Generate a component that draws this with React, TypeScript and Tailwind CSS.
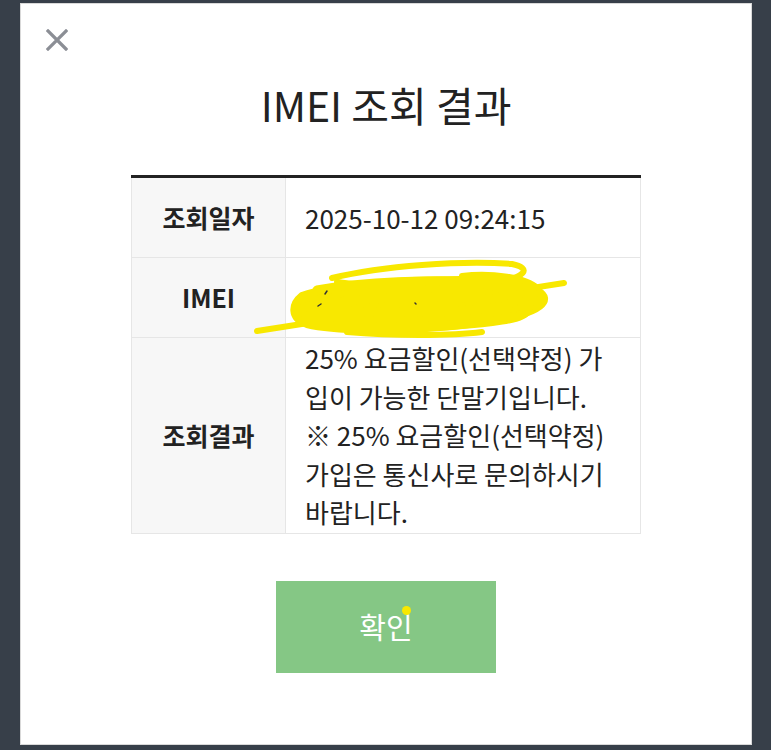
import React from 'react';

const rows = [
  { label: '조회일자', value: '2025-10-12 09:24:15' },
  { label: 'IMEI', value: '' },
];

// 노란 형광펜 낙서 (IMEI 가림)
const Scribble: React.FC = () => (
  <svg
    className="absolute left-0 top-0 pointer-events-none"
    width="510"
    height="80"
    viewBox="0 0 510 80"
    fill="none"
    stroke="#f8e800"
    strokeLinecap="round"
    strokeLinejoin="round"
    style={{ overflow: 'visible' }}
  >
    <path d="M125 73 L432 25" strokeWidth="6" />
    <path d="M200 20 C250 8 330 2 380 6 C400 10 395 20 360 24 C300 30 230 28 205 24" strokeWidth="6" />
    <path d="M170 38 C200 28 260 22 330 22 C380 22 410 30 412 40 C414 52 380 62 320 68 C260 74 200 72 175 66 C158 60 160 46 170 38 Z" fill="#f8e800" strokeWidth="8" />
    <path d="M165 52 C200 40 300 36 380 42 C405 46 400 58 370 62 C320 70 230 72 180 66" strokeWidth="9" />
    <path d="M185 32 C230 24 300 20 350 26 C390 32 395 46 360 50 C300 56 220 56 190 50" strokeWidth="9" />
    <path d="M215 74 C260 78 320 78 350 74" strokeWidth="6" />
    <path d="M330 18 C360 14 395 20 405 30" strokeWidth="6" />
    <path d="M186 48 l3 -2 M193 36 l2 -3 M283 45 l1 1" stroke="#333" strokeWidth="1.5" />
  </svg>
);

const App: React.FC = () => {
  return (
    <div
      className="w-[771px] h-[750px] bg-[#373f49] pt-[3px] pl-[20px] overflow-hidden"
      style={{ fontFamily: '"Noto Sans CJK KR", "Noto Sans", sans-serif' }}
    >
      <div className="relative w-[732px] h-[742px] bg-white border border-[#d9d9d9] flex flex-col items-center">
        {/* Close */}
        <button className="absolute left-[25px] top-[25px] w-[22px] h-[22px]" aria-label="닫기">
          <svg width="22" height="22" viewBox="0 0 22 22" stroke="#8b8e95" strokeWidth="3.2" strokeLinecap="square">
            <path d="M2 2 L20 20 M20 2 L2 20" />
          </svg>
        </button>

        {/* Header */}
        <h1 className="mt-[76px] text-[41px] leading-[49px] font-normal text-[#222]">IMEI 조회 결과</h1>

        {/* Table */}
        <div className="mt-[46px] w-[510px] border-t-[3px] border-[#222]">
          {rows.map((row, idx) => (
            <div key={row.label} className="relative flex h-[80px] border-x border-b border-[#e6e6e6]">
              <div className="w-[154px] shrink-0 bg-[#f7f7f7] border-r border-[#e6e6e6] flex items-center justify-center text-[25px] font-bold text-[#222]">
                {row.label}
              </div>
              <div className="flex-1 flex items-center px-[19px] text-[26px] text-[#222]">
                {row.value}
              </div>
              {idx === 1 && <Scribble />}
            </div>
          ))}
          <div className="flex border-x border-b border-[#e6e6e6]">
            <div className="w-[154px] shrink-0 bg-[#f7f7f7] border-r border-[#e6e6e6] flex items-center justify-center text-[25px] font-bold text-[#222]">
              조회결과
            </div>
            <div className="flex-1 pl-[19px] pr-[22px] py-[1px] text-[26px] leading-[38.5px] text-[#222]">
              25% 요금할인(선택약정) 가입이 가능한 단말기입니다.
              <br />※ 25% 요금할인(선택약정) 가입은 통신사로 문의하시기 바랍니다.
            </div>
          </div>
        </div>

        {/* Confirm */}
        <button className="relative mt-[47px] w-[220px] h-[92px] bg-[#85c785] text-white text-[29px]">
          확인
          <span className="absolute left-[126px] top-[25px] w-[9px] h-[9px] rounded-full bg-[#f8e800]" />
        </button>
      </div>
    </div>
  );
};

export default App;
